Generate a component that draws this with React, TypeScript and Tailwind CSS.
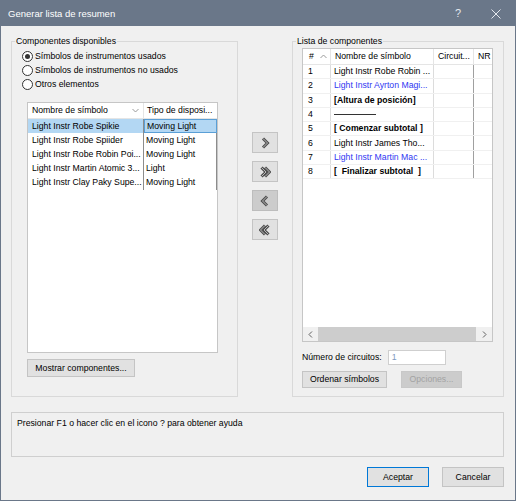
import React from "react";

const leftRows = [
  ["Light Instr Robe Spikie", "Moving Light"],
  ["Light Instr Robe Spiider", "Moving Light"],
  ["Light Instr Robe Robin Poi...", "Moving Light"],
  ["Light Instr Martin Atomic 3...", "Light"],
  ["Light Instr Clay Paky Supe...", "Moving Light"],
];

const rightRows = [
  { n: "1", t: "Light Instr Robe Robin ...", kind: "normal" },
  { n: "2", t: "Light Instr Ayrton Magi...", kind: "blue" },
  { n: "3", t: "[Altura de posición]", kind: "bold" },
  { n: "4", t: "", kind: "line" },
  { n: "5", t: "[ Comenzar subtotal ]", kind: "bold" },
  { n: "6", t: "Light Instr James Tho...", kind: "normal" },
  { n: "7", t: "Light Instr Martin Mac ...", kind: "blue" },
  { n: "8", t: "[  Finalizar subtotal  ]", kind: "bold" },
];

function Radio({ checked, label }: { checked?: boolean; label: string }) {
  return (
    <div className="flex h-[14px] items-center gap-[2px]">
      <span className="flex h-[11px] w-[11px] items-center justify-center rounded-full border border-[#333] bg-white">
        {checked && <span className="h-[5px] w-[5px] rounded-full bg-[#333]" />}
      </span>
      <span>{label}</span>
    </div>
  );
}

function Chevron({ dir, double }: { dir: "right" | "left"; double?: boolean }) {
  const paths = double
    ? dir === "right"
      ? ["M2.5 2.5 L7 7 L2.5 11.5", "M6 2.5 L10.5 7 L6 11.5"]
      : ["M9.5 2.5 L5 7 L9.5 11.5", "M6 2.5 L1.5 7 L6 11.5"]
    : dir === "right"
      ? ["M4 2.5 L8.5 7 L4 11.5"]
      : ["M8 2.5 L3.5 7 L8 11.5"];
  return (
    <svg width="12" height="14" viewBox="0 0 12 14">
      {paths.map((d) => (
        <path key={d + "o"} d={d} fill="none" stroke="#4d4d4d" strokeWidth="3" />
      ))}
      {paths.map((d) => (
        <path key={d + "i"} d={d} fill="none" stroke="#b9b9b9" strokeWidth="1" />
      ))}
    </svg>
  );
}

function ArrowBtn({ dir, double, pressed }: { dir: "right" | "left"; double?: boolean; pressed?: boolean }) {
  return (
    <div
      className={
        "flex h-[21px] w-[26px] items-center justify-center border " +
        (pressed ? "border-[#bdbdbd] bg-[#cccccc]" : "border-[#c4c4c4] bg-[#e1e1e1]")
      }
    >
      <Chevron dir={dir} double={double} />
    </div>
  );
}

function SmallChevron({ up }: { up?: boolean }) {
  return (
    <svg width="7" height="5" viewBox="0 0 7 5">
      <path d={up ? "M0.5 4 L3.5 1 L6.5 4" : "M0.5 1 L3.5 4 L6.5 1"} fill="none" stroke="#9a9a9a" strokeWidth="1" />
    </svg>
  );
}

export default function App() {
  return (
    <div className="flex h-[501px] w-[516px] flex-col border border-[#6a7789] bg-[#f0f0f0] font-['Liberation_Sans',Arial,sans-serif] text-[8.7px] leading-[11px] text-black">
      {/* title bar */}
      <div className="flex h-[25px] shrink-0 items-center bg-[#6a7789] pl-[7px] pr-[14px] text-[9.5px] text-white">
        <span className="flex-1">Generar lista de resumen</span>
        <span className="mr-[30px] text-[11px] text-[#e4e8ee]">?</span>
        <svg width="10" height="10" viewBox="0 0 10 10">
          <path d="M0.5 0.5 L9.5 9.5 M9.5 0.5 L0.5 9.5" stroke="#e4e8ee" strokeWidth="1" />
        </svg>
      </div>

      <div className="flex flex-col px-[10px]">
        <div className="mt-[10px] flex">
          {/* left group */}
          <fieldset className="h-[361px] w-[227px] min-w-0 border border-[#d9d9d9]">
            <legend className="ml-[3px] px-[1px] leading-[11px]">Componentes disponibles</legend>
            <div className="pl-[10px] pt-[2px]">
              <Radio checked label="Símbolos de instrumentos usados" />
              <Radio label="Símbolos de instrumentos no usados" />
              <Radio label="Otros elementos" />
            </div>
            <div className="ml-[15px] mt-[11px] flex h-[251px] w-[191px] flex-col border border-[#c6c6c6] bg-white">
              <div className="flex h-[16px] shrink-0 items-center border-b border-[#e5e5e5]">
                <div className="flex h-full w-[116px] items-center border-r border-[#e5e5e5] pl-[4px] pr-[4px]">
                  <span className="flex-1">Nombre de símbolo</span>
                  <SmallChevron />
                </div>
                <div className="pl-[3px]">Tipo de disposi...</div>
              </div>
              {leftRows.map((r, i) => (
                <div key={i} className={"flex h-[14.2px] " + (i === 0 ? "bg-[#b3d7f3]" : "")}>
                  <div className="flex w-[116px] items-center overflow-hidden whitespace-nowrap border-r border-[#8c8c8c] pl-[4px]">
                    {r[0]}
                  </div>
                  <div
                    className={
                      "flex w-[73px] items-center border-r pl-[2px] " +
                      (i === 0 ? "border border-[#5a9fd6]" : "border-[#8c8c8c]")
                    }
                  >
                    {r[1]}
                  </div>
                </div>
              ))}
            </div>
            <div className="ml-[15px] mt-[6px] flex h-[18px] w-[108px] items-center justify-center border border-[#c4c4c4] bg-[#e1e1e1]">
              Mostrar componentes...
            </div>
          </fieldset>

          {/* transfer arrows */}
          <div className="flex w-[54px] flex-col gap-[8px] pl-[14px] pt-[96px]">
            <ArrowBtn dir="right" />
            <ArrowBtn dir="right" double />
            <ArrowBtn dir="left" pressed />
            <ArrowBtn dir="left" double />
          </div>

          {/* right group */}
          <fieldset className="h-[361px] w-[212px] min-w-0 border border-[#d9d9d9]">
            <legend className="ml-[3px] px-[1px] leading-[11px]">Lista de componentes</legend>
            <div className="ml-[9px] mt-[1px] flex h-[294px] w-[191px] flex-col border border-[#c6c6c6] bg-white">
              <div className="flex h-[16px] shrink-0 items-center border-b border-[#e5e5e5]">
                <div className="flex h-full w-[28px] items-center gap-[6px] border-r border-[#e5e5e5] pl-[6px]">
                  <span>#</span>
                  <SmallChevron up />
                </div>
                <div className="flex h-full w-[103px] items-center border-r border-[#e5e5e5] pl-[4px]">
                  Nombre de símbolo
                </div>
                <div className="flex h-full w-[40px] items-center border-r border-[#e5e5e5] pl-[4px]">
                  Circuit...
                </div>
                <div className="pl-[4px]">NR</div>
              </div>
              <div className="flex-1">
                {rightRows.map((r) => (
                  <div key={r.n} className="flex h-[14.3px] border-b border-[#f0f0f0]">
                    <div className="flex w-[28px] items-center border-r border-[#dcdcdc] pl-[5px]">{r.n}</div>
                    <div
                      className={
                        "flex w-[103px] items-center overflow-hidden whitespace-pre border-r border-[#dcdcdc] pl-[3px] " +
                        (r.kind === "blue" ? "text-[#2f37f2]" : "") +
                        (r.kind === "bold" ? "font-bold" : "")
                      }
                    >
                      {r.kind === "line" ? <span className="h-px w-[42px] bg-[#333]" /> : r.t}
                    </div>
                    <div className="w-[40px] border-r border-[#a0a0a0]" />
                    <div className="flex-1" />
                  </div>
                ))}
              </div>
              <div className="flex h-[14px] shrink-0 items-center bg-[#f0f0f0]">
                <div className="flex w-[15px] justify-center">
                  <svg width="5" height="7" viewBox="0 0 5 7">
                    <path d="M4 0.5 L1 3.5 L4 6.5" fill="none" stroke="#606060" strokeWidth="1" />
                  </svg>
                </div>
                <div className="h-full w-[158px] bg-[#cdcdcd]" />
                <div className="flex flex-1 justify-center">
                  <svg width="5" height="7" viewBox="0 0 5 7">
                    <path d="M1 0.5 L4 3.5 L1 6.5" fill="none" stroke="#606060" strokeWidth="1" />
                  </svg>
                </div>
              </div>
            </div>
            <div className="ml-[9px] mt-[8px] flex h-[15px] items-center">
              <span>Número de circuitos:</span>
              <div className="ml-[6px] flex h-[15px] w-[58px] items-center border border-[#cfcfcf] bg-white pl-[3px] text-[#7d9ac0]">
                1
              </div>
            </div>
            <div className="ml-[9px] mt-[6px] flex gap-[14px]">
              <div className="flex h-[17px] w-[85px] items-center justify-center border border-[#c4c4c4] bg-[#e1e1e1]">
                Ordenar símbolos
              </div>
              <div className="flex h-[17px] w-[61px] items-center justify-center border border-[#c8c8c8] bg-[#cccccc] text-[#a3a3a3]">
                Opciones...
              </div>
            </div>
          </fieldset>
        </div>

        {/* help */}
        <div className="mt-[15px] h-[45px] w-[493px] border border-[#cfcfcf] px-[5px] pt-[5px]">
          Presionar F1 o hacer clic en el icono ? para obtener ayuda
        </div>

        {/* bottom buttons */}
        <div className="mt-[10px] flex w-[493px] justify-end gap-[13px]">
          <div className="flex h-[20px] w-[62px] items-center justify-center border border-[#0078d7] bg-[#e1e1e1]">
            Aceptar
          </div>
          <div className="flex h-[20px] w-[62px] items-center justify-center border border-[#c4c4c4] bg-[#e1e1e1]">
            Cancelar
          </div>
        </div>
      </div>
    </div>
  );
}
